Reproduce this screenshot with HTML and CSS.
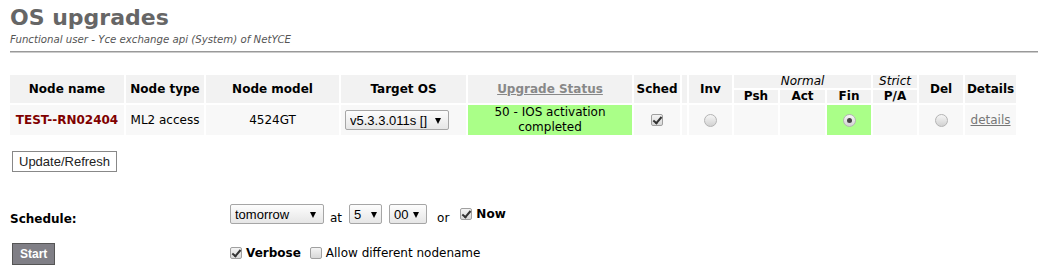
FILE: index.html
```html
<!DOCTYPE html>
<html lang="en">
<head>
    <meta charset="UTF-8">
    <title>OS upgrades</title>
    <link rel="stylesheet" href="styles.css">
</head>
<body>
    <h1>OS upgrades</h1>
    <div class="subtitle">Functional user - Yce exchange api (System) of NetYCE</div>
    <hr>

    <table class="nodes">
        <colgroup>
            <col style="width:114px"><col style="width:78px"><col style="width:133px">
            <col style="width:125px"><col style="width:164px"><col style="width:46px">
            <col style="width:5px"><col style="width:43px"><col style="width:44px">
            <col style="width:45px"><col style="width:44px"><col style="width:44px">
            <col style="width:44px"><col style="width:51px">
        </colgroup>
        <thead>
            <tr>
                <th rowspan="2">Node name</th>
                <th rowspan="2">Node type</th>
                <th rowspan="2">Node model</th>
                <th rowspan="2">Target OS</th>
                <th rowspan="2"><a href="#" class="sort">Upgrade Status</a></th>
                <th rowspan="2">Sched</th>
                <th rowspan="2"></th>
                <th rowspan="2">Inv</th>
                <th colspan="3" class="group">Normal</th>
                <th class="group">Strict</th>
                <th rowspan="2">Del</th>
                <th rowspan="2">Details</th>
            </tr>
            <tr class="sub">
                <th>Psh</th>
                <th>Act</th>
                <th>Fin</th>
                <th>P/A</th>
            </tr>
        </thead>
        <tbody>
            <tr>
                <td class="node">TEST--RN02404</td>
                <td>ML2 access</td>
                <td>4524GT</td>
                <td class="left">
                    <span class="dropdown"><select class="os"><option>v5.3.3.011s []</option></select></span>
                </td>
                <td class="done">50 - IOS activation<br>completed</td>
                <td><input type="checkbox" class="check" checked></td>
                <td></td>
                <td><input type="radio" class="radio" name="step"></td>
                <td></td>
                <td></td>
                <td class="done"><input type="radio" class="radio" name="step" checked></td>
                <td></td>
                <td><input type="radio" class="radio" name="step"></td>
                <td><a href="#" class="details">details</a></td>
            </tr>
        </tbody>
    </table>

    <button type="button" class="refresh">Update/Refresh</button>

    <div class="schedule">
        <div class="label">Schedule:</div>
        <div class="controls">
            <span class="dropdown"><select class="day"><option>tomorrow</option></select></span>
            <span class="low">at</span>
            <span class="dropdown"><select class="hour"><option>5</option></select></span>
            <span class="dropdown"><select class="minute"><option>00</option></select></span>
            <span class="low or">or</span>
            <label class="opt"><input type="checkbox" class="check" checked> <b>Now</b></label>
        </div>

        <div class="action"><button type="button" class="start">Start</button></div>
        <div class="controls">
            <label class="opt"><input type="checkbox" class="check" checked> <b>Verbose</b></label>
            <label class="opt plain"><input type="checkbox" class="check"> Allow different nodename</label>
        </div>
    </div>
</body>
</html>
```

FILE: styles.css
```css
body {
    font-family: "DejaVu Sans", Verdana, sans-serif;
    font-size: 12px;
    color: #000;
    margin: 8px 0 8px 8px;
}
h1 {
    font-size: 22px;
    line-height: 19px;
    color: #666;
    margin: 0 0 0 2px;
}
.subtitle {
    font-size: 10.2px;
    line-height: 12px;
    font-style: italic;
    color: #555;
    margin: 7px 0 0 2px;
}
hr {
    border: none;
    border-top: 1px solid #999;
    border-bottom: 1px solid #ccc;
    margin: 5px 0 0 2px;
}
.nodes {
    table-layout: fixed;
    border-spacing: 2px;
    margin-top: 20px;
    width: 1009px;
}
.nodes th,
.nodes td {
    padding: 0;
    text-align: center;
    vertical-align: middle;
}
.nodes th {
    background-color: #f2f2f2;
    font-weight: bold;
    line-height: 13px;
    height: 13px;
}
.nodes th.group {
    font-weight: normal;
    font-style: italic;
}
.nodes td {
    background-color: #f8f8f8;
    height: 29px;
    line-height: 15px;
}
.nodes td.left {
    text-align: left;
    padding-left: 4px;
}
.nodes td.done {
    background-color: #aaff88;
}
.node {
    font-weight: bold;
    color: #800000;
}
a.sort {
    color: #888;
}
a.details {
    color: #777;
}
.dropdown {
    position: relative;
    display: inline-block;
    vertical-align: middle;
}
.dropdown::after {
    content: "";
    position: absolute;
    right: 8px;
    top: 8px;
    border-left: 3px solid transparent;
    border-right: 3px solid transparent;
    border-top: 6px solid #000;
    pointer-events: none;
}
select {
    -webkit-appearance: none;
    appearance: none;
    font-family: "Liberation Sans", Arial, sans-serif;
    font-size: 13px;
    height: 20px;
    padding: 0 0 0 4px;
    border: 1px solid #a6a6a6;
    border-radius: 2px;
    background: linear-gradient(#fdfdfd, #e6e6e6);
    color: #000;
}
select.os { width: 104px; }
select.day { width: 94px; }
select.hour { width: 33px; }
select.minute { width: 38px; }
.check,
.radio {
    -webkit-appearance: none;
    appearance: none;
    margin: 0;
    position: relative;
    vertical-align: middle;
    border: 1px solid #a0a0a0;
    background: linear-gradient(#f4f4f4, #d8d8d8);
}
.check {
    width: 12px;
    height: 12px;
    border-radius: 2px;
}
.check:checked::after {
    content: "";
    position: absolute;
    left: 3px;
    top: 0;
    width: 3px;
    height: 7px;
    border: solid #333;
    border-width: 0 2px 2px 0;
    transform: rotate(40deg);
}
.radio {
    width: 13px;
    height: 13px;
    border-radius: 50%;
    border-color: #b4b4b4;
    background: linear-gradient(#f6f6f6, #d2d2d2);
}
.radio:checked::after {
    content: "";
    position: absolute;
    left: 3px;
    top: 3px;
    width: 5px;
    height: 5px;
    border-radius: 50%;
    background-color: #444;
}
button {
    font-family: "Liberation Sans", Arial, sans-serif;
    font-size: 13px;
    cursor: pointer;
}
.refresh {
    display: block;
    margin: 14px 0 0 4px;
    height: 21px;
    padding: 0 6px;
    background-color: #fff;
    border: 1px solid #888;
    color: #222;
}
.schedule {
    display: grid;
    grid-template-columns: 220px auto;
    grid-template-rows: 40px 38px;
    align-items: center;
    margin: 22px 0 0 2px;
}
.label {
    font-weight: bold;
    padding-top: 10px;
}
.action {
    padding-top: 2px;
}
.action .start {
    margin: 0 0 0 2px;
}
.controls {
    display: flex;
    align-items: center;
    gap: 4px;
}
.low {
    position: relative;
    top: 4px;
    margin: 0 3px 0 2px;
}
.hour {
    margin-right: 3px;
}
.or {
    margin: 0 7px 0 6px;
}
.opt {
    display: inline-flex;
    align-items: center;
    gap: 4px;
    font-size: 12px;
}
.opt.plain {
    margin-left: 5px;
}
.start {
    height: 22px;
    padding: 0 7px;
    background-color: #807f86;
    border: 1px solid #555;
    color: #fff;
    font-weight: bold;
    font-size: 12px;
}
```
